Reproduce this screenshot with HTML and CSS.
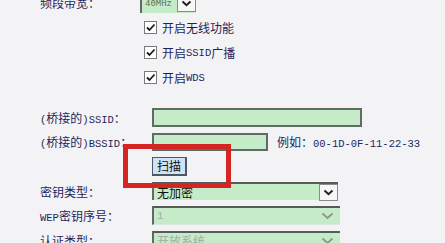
FILE: index.html
```html
<!DOCTYPE html>
<html lang="zh-CN">
<head>
  <meta charset="UTF-8">
  <title>无线设置</title>
  <link rel="stylesheet" href="styles.css">
</head>
<body>
  <div class="page">
    <div class="top">
      <div class="row">
        <span class="lbl">频段带宽：</span>
        <div class="sel sel-bw">
          <span class="val m">40MHz</span>
          <span class="arrow"><svg width="11" height="7" viewBox="0 0 11 7"><path d="M1.5 1.5 L5.5 5.2 L9.5 1.5" fill="none" stroke="#222" stroke-width="2"/></svg></span>
        </div>
      </div>
      <div class="row opt"><span class="chk"><svg width="11" height="11" viewBox="0 0 11 11"><path d="M2 5.5 L4.5 8 L9.5 2.5" fill="none" stroke="#1a1a1a" stroke-width="1.8"/></svg></span>开启无线功能</div>
      <div class="row opt"><span class="chk"><svg width="11" height="11" viewBox="0 0 11 11"><path d="M2 5.5 L4.5 8 L9.5 2.5" fill="none" stroke="#1a1a1a" stroke-width="1.8"/></svg></span>开启<span class="m">SSID</span>广播</div>
      <div class="row opt"><span class="chk"><svg width="11" height="11" viewBox="0 0 11 11"><path d="M2 5.5 L4.5 8 L9.5 2.5" fill="none" stroke="#1a1a1a" stroke-width="1.8"/></svg></span>开启<span class="m">WDS</span></div>
    </div>

    <div class="bridge">
      <div class="row">
        <span class="lbl"><span class="m">(</span>桥接的<span class="m">)SSID</span>：</span>
        <input class="inp inp-ssid" type="text">
      </div>
      <div class="row">
        <span class="lbl"><span class="m">(</span>桥接的<span class="m">)BSSID</span>：</span>
        <input class="inp inp-bssid" type="text">
        <span class="hint">例如：<span class="m">00-1D-0F-11-22-33</span></span>
      </div>
      <div class="row">
        <span class="lbl"></span>
        <button class="btn">扫描</button>
      </div>
      <div class="row">
        <span class="lbl">密钥类型：</span>
        <div class="sel sel-key">
          <span class="val">无加密</span>
          <span class="arrow"><svg width="11" height="7" viewBox="0 0 11 7"><path d="M1.5 1.5 L5.5 5.2 L9.5 1.5" fill="none" stroke="#222" stroke-width="2"/></svg></span>
        </div>
      </div>
      <div class="row">
        <span class="lbl"><span class="m">WEP</span>密钥序号：</span>
        <div class="sel sel-off">
          <span class="val m">1</span>
          <span class="arrow-off"><svg width="13" height="8" viewBox="0 0 13 8"><path d="M1.5 1.5 L6.5 6 L11.5 1.5" fill="none" stroke="#8a9a8c" stroke-width="1.8"/></svg></span>
        </div>
      </div>
      <div class="row">
        <span class="lbl">认证类型：</span>
        <div class="sel sel-off">
          <span class="val">开放系统</span>
          <span class="arrow-off"><svg width="13" height="8" viewBox="0 0 13 8"><path d="M1.5 1.5 L6.5 6 L11.5 1.5" fill="none" stroke="#8a9a8c" stroke-width="1.8"/></svg></span>
        </div>
      </div>

      <!-- 红框标注 -->
      <div class="mark"></div>
    </div>
  </div>
</body>
</html>
```

FILE: styles.css
```css
body {
  margin: 0;
  background: #f3f3f5;
  color: #1f1f5c;
  font-family: "Noto Sans CJK SC", sans-serif;
  font-size: 12px;
  overflow: hidden;
}

.m {
  font-family: "Liberation Mono", monospace;
  font-size: 10.5px;
}

.page {
  padding-left: 40px;
  margin-top: -10px;
}

.row {
  display: flex;
  align-items: center;
  height: 25px;
  white-space: nowrap;
}

.top .lbl {
  width: 100px;
}

.top .opt {
  padding-left: 104px;
}

.chk {
  display: flex;
  width: 11px;
  height: 11px;
  border: 1px solid #7a7a7a;
  background: #fff;
  margin-right: 5px;
}

.bridge {
  position: relative;
  margin-top: 15px;
}

.bridge .row {
  height: 24.6px;
}

.bridge .lbl {
  width: 112px;
  flex: none;
}

/* 输入框 */
.inp {
  box-sizing: border-box;
  height: 19px;
  margin: 0;
  padding: 0 3px;
  background: #c6ebc9;
  border: 2px solid #5e6c63;
  outline: none;
}

.inp-ssid {
  width: 210px;
}

.inp-bssid {
  width: 116px;
  height: 18px;
}

.hint {
  margin-left: 9px;
}

.btn {
  box-sizing: border-box;
  width: 35px;
  height: 19px;
  padding: 0;
  margin: 0;
  background: #cfe3f4;
  border: 1px solid #4d5866;
  border-right-width: 2px;
  border-bottom-width: 2px;
  color: #111;
  font-family: "Noto Sans CJK SC", sans-serif;
  font-size: 12px;
  line-height: 1;
}

/* 下拉框 */
.sel {
  box-sizing: border-box;
  display: flex;
  align-items: center;
  height: 19px;
  background: #c6ebc9;
  border-top: 2px solid #555c58;
  border-left: 2px solid #626a65;
}

.sel .val {
  padding-left: 3px;
}

.sel .arrow {
  box-sizing: border-box;
  display: flex;
  align-items: center;
  justify-content: center;
  width: 19px;
  height: 17px;
  margin-left: auto;
  background: #f7f7f7;
  border: 1px solid #8c8c8c;
}

.sel-bw {
  width: 56px;
  height: 20px;
}

.sel-bw .val {
  color: #55705a;
  font-size: 9px;
  padding-right: 2px;
}

.sel-key {
  width: 186px;
  height: 18px;
  color: #111;
}

.sel-off {
  width: 188px;
  color: #a2aea4;
  border-bottom: 1px solid #dbe9dc;
}

.arrow-off {
  display: flex;
  margin-left: auto;
  margin-right: 6px;
}

.mark {
  position: absolute;
  left: 83px;
  top: 39px;
  width: 98px;
  height: 34px;
  border: 5px solid #d42424;
}
```
